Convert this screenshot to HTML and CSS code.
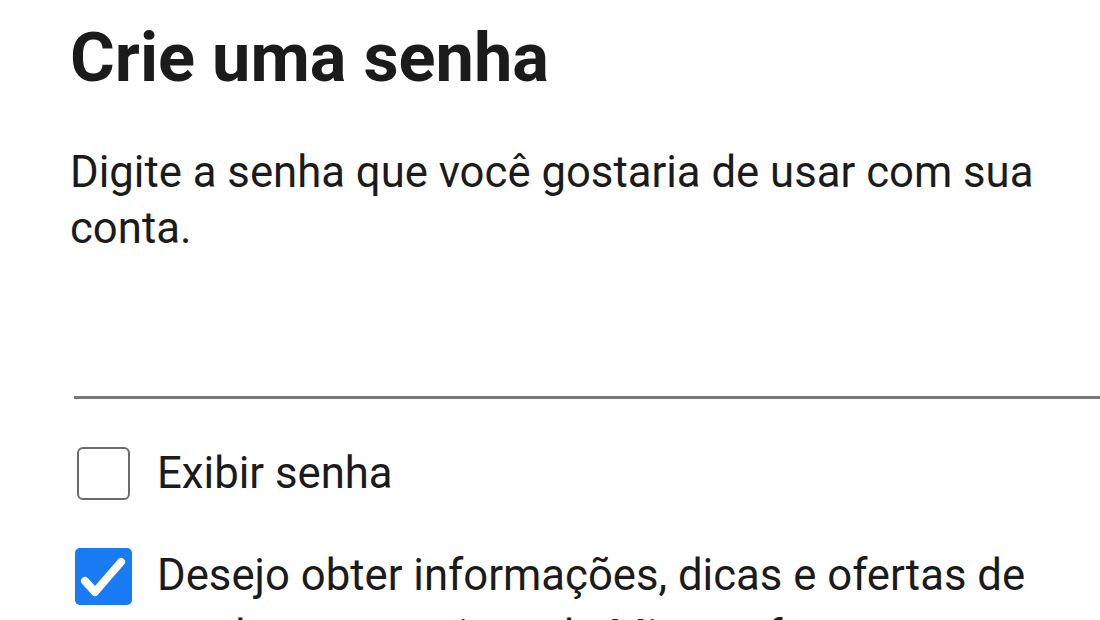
FILE: index.html
```html
<!DOCTYPE html>
<html lang="pt-BR">
<head>
<meta charset="utf-8">
<title>Crie uma senha</title>
<link rel="stylesheet" href="styles.css">
</head>
<body>
<main class="page">
  <h1 class="title">Crie uma senha</h1>
  <p class="desc">Digite a senha que você gostaria de usar com sua conta.</p>
  <div class="field"></div>
  <label class="check">
    <span class="mark"><span class="box"></span></span>
    <span class="label">Exibir senha</span>
  </label>
  <label class="check check-on">
    <span class="mark">
      <span class="box box-on">
        <svg viewBox="0 0 57 57" width="57" height="57" aria-hidden="true"><path d="M10 33 L20 44 L46 14" fill="none" stroke="#fff" stroke-width="8" stroke-linecap="round" stroke-linejoin="round"/></svg>
      </span>
    </span>
    <span class="label">Desejo obter informações, dicas e ofertas de produtos e serviços da Microsoft.</span>
  </label>
</main>
</body>
</html>
```
FILE: styles.css
```css
html, body {
  margin: 0;
  padding: 0;
  background: #fff;
}
body {
  font-family: Roboto, "Noto Sans", sans-serif;
  color: #1b1b1b;
  overflow: hidden;
  height: 620px;
}
.page {
  padding: 18px 0 0 70px;
  display: flex;
  flex-direction: column;
}
.title {
  margin: 0;
  font-size: 68.5px;
  font-weight: 700;
  line-height: 80px;
  color: #1b1b1b;
}
.desc {
  margin: 46px 0 0 0;
  font-size: 43.7px;
  line-height: 56px;
  width: 980px;
}
.field {
  margin: 0 0 0 4px;
  height: 140px;
  border-bottom: 3px solid #777;
}
.check {
  display: flex;
  align-items: flex-start;
  font-size: 43.7px;
  line-height: 57px;
  margin-top: 46px;
}
.check-on {
  line-height: 61px;
  margin-top: 43px;
}
.mark {
  flex: none;
  width: 87px;
  display: flex;
}
.box {
  flex: none;
  width: 53px;
  height: 53px;
  margin: 2px 0 0 7px;
  border: 2.5px solid #6b6b6b;
  border-radius: 6px;
  box-sizing: border-box;
}
.box-on {
  width: 57px;
  height: 57px;
  margin: 3px 0 0 5px;
  border: none;
  border-radius: 5px;
  background: #1a7cf4;
}
.box-on svg {
  display: block;
}
.label {
  width: 900px;
}
```
